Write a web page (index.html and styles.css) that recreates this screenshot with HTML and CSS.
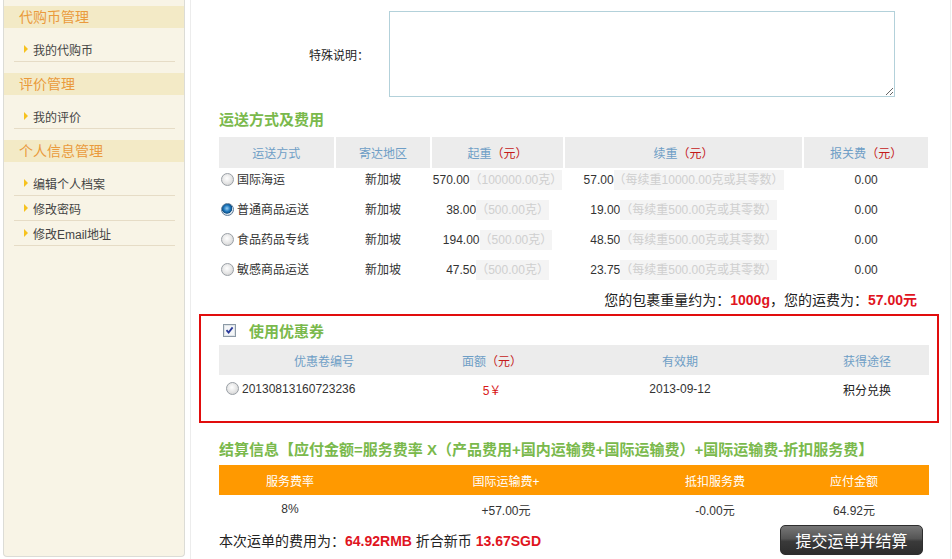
FILE: index.html
```html
<!DOCTYPE html>
<html lang="zh-CN">
<head>
    <meta charset="UTF-8">
    <title>提交运单</title>
    <link rel="stylesheet" href="styles.css">
</head>
<body>
    <div class="page">
        <aside class="sidebar">
            <div class="menu-group">
                <h3 class="menu-title">代购币管理</h3>
                <ul class="menu-list">
                    <li><a href="#">我的代购币</a></li>
                </ul>
            </div>
            <div class="menu-group">
                <h3 class="menu-title">评价管理</h3>
                <ul class="menu-list">
                    <li><a href="#">我的评价</a></li>
                </ul>
            </div>
            <div class="menu-group">
                <h3 class="menu-title">个人信息管理</h3>
                <ul class="menu-list">
                    <li><a href="#">编辑个人档案</a></li>
                    <li><a href="#">修改密码</a></li>
                    <li><a href="#">修改Email地址</a></li>
                </ul>
            </div>
        </aside>

        <main class="content">
            <div class="remark-row">
                <label class="remark-label" for="remark">特殊说明：</label>
                <textarea id="remark" class="remark-input"></textarea>
            </div>

            <h2 class="section-title">运送方式及费用</h2>
            <table class="ship-table">
                <colgroup>
                    <col style="width:114px">
                    <col style="width:94px">
                    <col style="width:130px">
                    <col style="width:236px">
                    <col style="width:123px">
                </colgroup>
                <thead>
                    <tr>
                        <th>运送方式</th>
                        <th>寄达地区</th>
                        <th>起重<em>（元）</em></th>
                        <th>续重<em>（元）</em></th>
                        <th>报关费<em>（元）</em></th>
                    </tr>
                </thead>
                <tbody>
                    <tr>
                        <td class="way"><label><input type="radio" name="ship" class="radio">国际海运</label></td>
                        <td>新加坡</td>
                        <td>570.00<span class="note">（100000.00克）</span></td>
                        <td>57.00<span class="note">（每续重10000.00克或其零数）</span></td>
                        <td>0.00</td>
                    </tr>
                    <tr>
                        <td class="way"><label><input type="radio" name="ship" class="radio" checked>普通商品运送</label></td>
                        <td>新加坡</td>
                        <td>38.00<span class="note">（500.00克）</span></td>
                        <td>19.00<span class="note">（每续重500.00克或其零数）</span></td>
                        <td>0.00</td>
                    </tr>
                    <tr>
                        <td class="way"><label><input type="radio" name="ship" class="radio">食品药品专线</label></td>
                        <td>新加坡</td>
                        <td>194.00<span class="note">（500.00克）</span></td>
                        <td>48.50<span class="note">（每续重500.00克或其零数）</span></td>
                        <td>0.00</td>
                    </tr>
                    <tr>
                        <td class="way"><label><input type="radio" name="ship" class="radio">敏感商品运送</label></td>
                        <td>新加坡</td>
                        <td>47.50<span class="note">（500.00克）</span></td>
                        <td>23.75<span class="note">（每续重500.00克或其零数）</span></td>
                        <td>0.00</td>
                    </tr>
                </tbody>
            </table>
            <p class="weight-line">您的包裹重量约为：<b class="hot">1000g</b>，您的运费为：<b class="hot">57.00元</b></p>

            <div class="coupon-box">
                <div class="coupon-head">
                    <span class="checkbox">
                        <svg width="13" height="13" viewBox="0 0 13 13">
                            <rect x="0.5" y="0.5" width="12" height="12" fill="#f4f6f8" stroke="#8c9aa6"/>
                            <rect x="1.5" y="1.5" width="10" height="10" fill="none" stroke="#dfe4e8"/>
                            <path d="M3.5 6.2 L5.6 8.6 L9.6 3.4" fill="none" stroke="#2a3a9a" stroke-width="1.8"/>
                        </svg>
                    </span>
                    <span class="coupon-title">使用优惠券</span>
                </div>
                <table class="coupon-table">
                    <colgroup>
                        <col style="width:210px">
                        <col style="width:126px">
                        <col style="width:250px">
                        <col style="width:124px">
                    </colgroup>
                    <thead>
                        <tr>
                            <th>优惠卷编号</th>
                            <th>面额<em>（元）</em></th>
                            <th>有效期</th>
                            <th>获得途径</th>
                        </tr>
                    </thead>
                    <tbody>
                        <tr>
                            <td class="code"><label><input type="radio" name="coupon" class="radio">20130813160723236</label></td>
                            <td class="amount">5￥</td>
                            <td>2013-09-12</td>
                            <td class="source">积分兑换</td>
                        </tr>
                    </tbody>
                </table>
            </div>

            <h2 class="section-title settle-title">结算信息【应付金额=服务费率 X（产品费用+国内运输费+国际运输费）+国际运输费-折扣服务费】</h2>
            <table class="settle-table">
                <colgroup>
                    <col style="width:142px">
                    <col style="width:290px">
                    <col style="width:128px">
                    <col style="width:150px">
                </colgroup>
                <thead>
                    <tr>
                        <th>服务费率</th>
                        <th>国际运输费+</th>
                        <th>抵扣服务费</th>
                        <th>应付金额</th>
                    </tr>
                </thead>
                <tbody>
                    <tr>
                        <td>8%</td>
                        <td>+57.00元</td>
                        <td>-0.00元</td>
                        <td>64.92元</td>
                    </tr>
                </tbody>
            </table>

            <div class="total-bar">
                <p class="total-text">本次运单的费用为：<b class="hot">64.92RMB</b> 折合新币 <b class="hot">13.67SGD</b></p>
                <button type="button" class="submit-btn">提交运单并结算</button>
            </div>
        </main>
    </div>
</body>
</html>
```

FILE: styles.css
```css
body {
    margin: 0;
    background: #fff;
    font-family: "Liberation Sans", "Noto Sans CJK SC", sans-serif;
    font-size: 12px;
    color: #333;
}

.page {
    display: flex;
    align-items: stretch;
    height: 559px;
    overflow: hidden;
}

/* left menu */
.sidebar {
    width: 180px;
    margin-left: 3px;
    margin-bottom: 2px;
    padding-top: 6px;
    background: #f8f4e6;
    border: 1px solid #dcdcd6;
    border-top: none;
    border-radius: 0 0 4px 4px;
}

.menu-group {
    margin-bottom: 11px;
}

.menu-title {
    margin: 0;
    height: 22px;
    line-height: 22px;
    padding-left: 15px;
    background: #f3eac6;
    color: #ea9a3c;
    font-size: 14px;
    font-weight: normal;
}

.menu-list {
    list-style: none;
    margin: 0 9px 0 10px;
    padding: 9px 0 0 0;
}

.menu-list li {
    display: flex;
    align-items: center;
    height: 24px;
    padding-left: 10px;
    border-bottom: 1px solid #e6dcc6;
}

.menu-list li::before {
    content: "";
    width: 0;
    height: 0;
    margin-right: 5px;
    border-left: 4px solid #f6c21e;
    border-top: 4px solid transparent;
    border-bottom: 4px solid transparent;
}

.menu-list a {
    color: #444;
    text-decoration: none;
}

/* main area */
.content {
    width: 709px;
    margin-left: 5px;
    padding: 11px 22px 0 28px;
    border-left: 1px solid #ececec;
    border-right: 1px solid #ececec;
}

.remark-row {
    display: flex;
    align-items: center;
    margin-left: -28px;
}

.remark-label {
    width: 178px;
    padding-right: 20px;
    text-align: right;
    color: #222;
}

.remark-input {
    width: 504px;
    height: 84px;
    margin: 0;
    padding: 0;
    border: 1px solid #b3d1da;
}

.section-title {
    margin: 13px 0 7px;
    height: 20px;
    line-height: 20px;
    font-size: 15px;
    font-weight: bold;
    color: #7ab94c;
    white-space: nowrap;
}

.ship-table {
    width: 713px;
    margin-left: -2px;
    table-layout: fixed;
    border-collapse: separate;
    border-spacing: 2px 0;
}

.ship-table th,
.coupon-table th {
    height: 30px;
    padding: 0;
    background: #ececec;
    color: #6e9ec6;
    font-weight: normal;
    text-align: center;
}

.ship-table th em,
.coupon-table th em {
    font-style: normal;
    color: #c41a1a;
}

.ship-table th {
    height: 31px;
}

.ship-table td {
    height: 30px;
    padding: 0;
    line-height: 24px;
    vertical-align: top;
    text-align: center;
    white-space: nowrap;
}

.ship-table td.way {
    text-align: left;
    padding-left: 2px;
}

.radio {
    appearance: none;
    -webkit-appearance: none;
    width: 13px;
    height: 13px;
    margin: 0 3px 0 0;
    vertical-align: -2px;
    border: 1px solid #9aa0a6;
    border-radius: 50%;
    background: radial-gradient(circle at 45% 40%, #ffffff 0%, #e4e4e4 55%, #c8c8c8 100%);
}

.radio:checked {
    border-color: #5d7b98;
    background: radial-gradient(circle at 45% 40%, #9ad0f5 0%, #1f78bd 35%, #0b4f86 55%, #dfe6ec 62%, #c8ced4 100%);
}

.note {
    display: inline-block;
    line-height: 20px;
    background: #f4f4f4;
    color: #cfcfcf;
}

.weight-line {
    margin: 0;
    padding-right: 11px;
    line-height: 24px;
    text-align: right;
    font-size: 14px;
    color: #222;
}

.hot {
    color: #e0141e;
    font-weight: bold;
}

/* coupon */
.coupon-box {
    margin: 2px -11px 0 -20px;
    padding: 0 9px 18px 18px;
    border: 2px solid #e10d0d;
}

.coupon-head {
    display: flex;
    align-items: center;
    height: 29px;
}

.checkbox {
    display: flex;
    margin-left: 4px;
    margin-right: 13px;
}

.coupon-title {
    font-size: 15px;
    font-weight: bold;
    color: #7ab94c;
}

.coupon-table,
.settle-table {
    width: 710px;
    table-layout: fixed;
    border-collapse: collapse;
}

.coupon-table td {
    height: 28px;
    padding: 0;
    text-align: center;
    color: #333;
}

.coupon-table td.code {
    text-align: left;
    padding-left: 7px;
}

.coupon-table td.amount {
    color: #d81818;
}

.coupon-table td.source {
    color: #222;
}

/* settlement */
.settle-title {
    margin: 17px 0 5px;
}

.settle-table th {
    height: 30px;
    padding: 0;
    background: #ff9900;
    color: #fff;
    font-weight: normal;
    text-align: center;
}

.settle-table td {
    height: 28px;
    padding: 0;
    text-align: center;
    color: #333;
}

.total-bar {
    display: flex;
    align-items: center;
    justify-content: space-between;
    height: 34px;
}

.total-text {
    margin: 0;
    font-size: 14px;
    color: #222;
}

.submit-btn {
    width: 143px;
    height: 30px;
    margin-right: 5px;
    padding: 0;
    border: 1px solid #2e2e2e;
    border-radius: 5px;
    background: linear-gradient(#777 0%, #555 45%, #3a3a3a 55%, #2d2d2d 100%);
    color: #fff;
    font-family: "Noto Sans CJK SC", sans-serif;
    font-size: 16px;
    cursor: pointer;
}
```
